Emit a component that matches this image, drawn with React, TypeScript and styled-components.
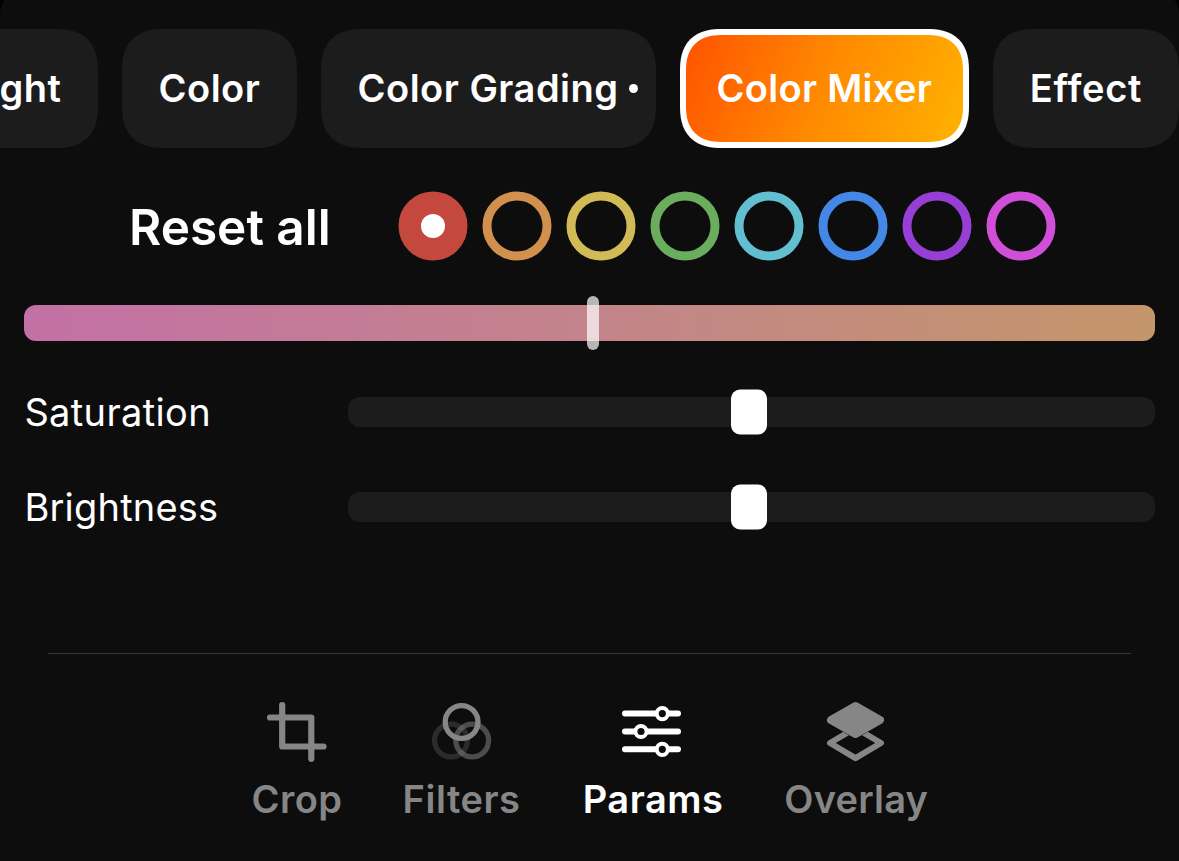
import React from "react";
import styled, { createGlobalStyle } from "styled-components";

const GlobalStyle = createGlobalStyle`
  *, *::before, *::after { box-sizing: border-box; }
  html, body { margin: 0; background: #000; }
  body { overflow: hidden; -webkit-font-smoothing: antialiased; }
  button { appearance: none; border: 0; margin: 0; padding: 0; background: none; color: inherit; font: inherit; }
`;

const Screen = styled.main`
  width: 1179px;
  height: 861px;
  overflow: hidden;
  background: #000;
`;

const Panel = styled.section`
  display: flex;
  flex-direction: column;
  width: 1179px;
  height: 871px;
  margin-top: -10px;
  padding-top: 39px;
  border-radius: 24px 24px 0 0;
  background: #0d0d0d;
  color: #fff;
  font-family: Inter, "Liberation Sans", sans-serif;
  overflow: hidden;
`;

const ChipRow = styled.nav`
  display: flex;
  flex: none;
  gap: 24px;
  height: 119px;
  margin-left: -67px;
`;

const Chip = styled.button<{ $width: number; $inset: number; $active?: boolean }>`
  display: flex;
  flex: none;
  align-items: center;
  width: ${(p) => p.$width}px;
  height: 119px;
  padding-left: ${(p) => (p.$active ? p.$inset - 6 : p.$inset)}px;
  border: ${(p) => (p.$active ? "6px solid #fff" : "0")};
  border-radius: 36px;
  background: ${(p) =>
    p.$active
      ? "linear-gradient(112.4deg, #ff5000, #ff8a00 50%, #ffb400) border-box"
      : "#1c1c1c"};
  @supports (corner-shape: superellipse(1.3)) {
    border-radius: 42px;
    corner-shape: superellipse(1.3);
  }
`;

const Label = styled.span<{ $size: number; $weight: number; $spacing: number }>`
  font-size: ${(p) => p.$size}px;
  font-weight: ${(p) => p.$weight};
  letter-spacing: ${(p) => p.$spacing}px;
  line-height: 48px;
  white-space: nowrap;
`;

const ChipLabel = styled(Label)`
  margin-bottom: 2px;
`;

const TabLabel = styled(Label)<{ $inset?: number }>`
  padding-left: ${(p) => p.$inset ?? 0}px;
`;

const ChangedDot = styled.i`
  width: 9px;
  height: 9px;
  margin-left: 10px;
  border-radius: 50%;
  background: #fff;
`;

const HueRow = styled.div`
  display: flex;
  flex: none;
  align-items: center;
  height: 69px;
  margin-top: 43.5px;
  padding-left: 129px;
`;

const ResetButton = styled.button`
  width: 270px;
  padding-top: 2px;
  text-align: left;
`;

const Swatches = styled.div`
  display: flex;
  gap: 15px;
  transform: translate(-0.5px, -0.5px);
`;

const Swatch = styled.button<{ $color: string; $active?: boolean }>`
  display: grid;
  place-items: center;
  width: 69px;
  height: 69px;
  border: 9px solid ${(p) => p.$color};
  border-radius: 50%;
  background: ${(p) => (p.$active ? p.$color : "transparent")};
  &::after {
    content: "";
    width: 24px;
    height: 24px;
    border-radius: 50%;
    background: ${(p) => (p.$active ? "#fff" : "transparent")};
    transform: translate(-0.5px, 0.5px);
  }
`;

const HueTrack = styled.div`
  position: relative;
  flex: none;
  height: 36px;
  margin: 44.5px 24px 0;
  border-radius: 12px;
  background: linear-gradient(90deg, #c370a6, #c3848a 50%, #c4966a);
`;

const HueThumb = styled.i`
  position: absolute;
  top: -9px;
  left: 563px;
  width: 12px;
  height: 54px;
  border-radius: 6px;
  background: rgba(255, 255, 255, 0.7);
`;

const Sliders = styled.div`
  display: flex;
  flex: none;
  flex-direction: column;
  gap: 47px;
  margin: 47px 24px 0;
`;

const SliderRow = styled.div`
  display: flex;
  align-items: center;
  justify-content: space-between;
  height: 48px;
`;

const SliderLabel = styled(Label)`
  padding-left: 0.4px;
`;

const Track = styled.div`
  position: relative;
  width: 807px;
  height: 30px;
  border-radius: 12px;
  background: #1c1c1c;
`;

const Thumb = styled.i`
  position: absolute;
  top: -7px;
  left: 383px;
  width: 36px;
  height: 45px;
  border-radius: 9px;
  background: #fff;
  transform: translateY(-0.5px);
`;

const Divider = styled.hr`
  flex: none;
  width: 1083px;
  height: 1px;
  margin: 122px 48px 0;
  border: 0;
  background: #363636;
`;

const TabBar = styled.nav`
  display: flex;
  flex: none;
  justify-content: center;
  gap: 60px;
  margin-top: 47px;
  padding-right: 2px;
`;

const Tab = styled.button<{ $width: number; $active?: boolean }>`
  display: flex;
  flex-direction: column;
  align-items: center;
  gap: 12px;
  width: ${(p) => p.$width}px;
  color: ${(p) => (p.$active ? "#fff" : "#868686")};
`;

const Icon = styled.svg`
  display: block;
  width: 62px;
  height: 62px;
  overflow: visible;
`;

const CropIcon = () => (
  <Icon viewBox="0 0 62 62" fill="none" stroke="currentColor" strokeWidth="6.2" strokeLinecap="round" strokeLinejoin="round">
    <path d="M16.200 4v41.500h41.300M4 16.500h41.300v41.300" />
  </Icon>
);

const FiltersIcon = () => (
  <Icon viewBox="0 0 62 62" fill="none" stroke="currentColor" strokeWidth="5.3">
    <circle cx="20" cy="39.500" r="16.400" opacity="0.25" />
    <circle cx="41.200" cy="39.500" r="16.400" opacity="0.52" />
    <circle cx="30.600" cy="21" r="16.400" />
  </Icon>
);

const ParamsIcon = () => (
  <Icon viewBox="0 0 62 62" fill="#0d0d0d" stroke="currentColor" strokeLinecap="round">
    <path d="M4 12.600h53M4 30.500h53M4 48.300h53" strokeWidth="6" />
    <g strokeWidth="4">
      <circle cx="41.300" cy="12.600" r="5.600" />
      <circle cx="20" cy="30.500" r="5.600" />
      <circle cx="41.300" cy="48.300" r="5.600" />
    </g>
  </Icon>
);

const OverlayIcon = () => (
  <Icon viewBox="0 0 62 62" fill="none" stroke="currentColor" strokeLinejoin="round">
    <path d="M31.500 27L57 42L31.500 57.200L6 42Z" strokeWidth="6" />
    <path d="M31.500 5L56 19L31.500 33L7 19Z" fill="currentColor" stroke="#0d0d0d" strokeWidth="8.600" />
    <path d="M31.500 5L56 19L31.500 33L7 19Z" fill="currentColor" strokeWidth="8" />
  </Icon>
);

const hues = ["#c4483d", "#d2904e", "#d1bb56", "#6aad5c", "#62bfd0", "#4388e6", "#973fd5", "#d04fd8"];

const chips = [
  { name: "Light", width: 165, inset: 34, spacing: 0.5 },
  { name: "Color", width: 175, inset: 36.5, spacing: 0.5 },
  { name: "Color Grading", width: 335, inset: 36.5, spacing: 0.5, changed: true },
  { name: "Color Mixer", width: 289, inset: 36.5, spacing: 0.3, active: true },
  { name: "Effect", width: 185.5, inset: 36.7, spacing: 0.75 },
];

const sliders = [
  { name: "Saturation", spacing: 0.35 },
  { name: "Brightness", spacing: 0.2 },
];

const tabs = [
  { name: "Crop", width: 92, spacing: 0.5, inset: 1, icon: CropIcon },
  { name: "Filters", width: 118, spacing: 0.5, icon: FiltersIcon },
  { name: "Params", width: 142, spacing: 0.5, inset: 3, icon: ParamsIcon, active: true },
  { name: "Overlay", width: 144, spacing: 0.2, inset: 3.5, icon: OverlayIcon },
];

export default function App() {
  return (
    <>
      <GlobalStyle />
      <Screen>
        <Panel>
          <ChipRow>
            {chips.map((c) => (
              <Chip key={c.name} $width={c.width} $inset={c.inset} $active={c.active}>
                <ChipLabel $size={38} $weight={580} $spacing={c.spacing}>{c.name}</ChipLabel>
                {c.changed && <ChangedDot />}
              </Chip>
            ))}
          </ChipRow>
          <HueRow>
            <ResetButton>
              <Label $size={49.5} $weight={590} $spacing={0}>Reset all</Label>
            </ResetButton>
            <Swatches>
              {hues.map((h, i) => (
                <Swatch key={h} $color={h} $active={i === 0} aria-label={`Hue ${i + 1}`} />
              ))}
            </Swatches>
          </HueRow>
          <HueTrack>
            <HueThumb />
          </HueTrack>
          <Sliders>
            {sliders.map((s) => (
              <SliderRow key={s.name}>
                <SliderLabel $size={38} $weight={400} $spacing={s.spacing}>{s.name}</SliderLabel>
                <Track>
                  <Thumb />
                </Track>
              </SliderRow>
            ))}
          </Sliders>
          <Divider />
          <TabBar>
            {tabs.map(({ name, width, spacing, inset, icon: TabIcon, active }) => (
              <Tab key={name} $width={width} $active={active}>
                <TabIcon />
                <TabLabel $size={38} $weight={580} $spacing={spacing} $inset={inset}>{name}</TabLabel>
              </Tab>
            ))}
          </TabBar>
        </Panel>
      </Screen>
    </>
  );
}
